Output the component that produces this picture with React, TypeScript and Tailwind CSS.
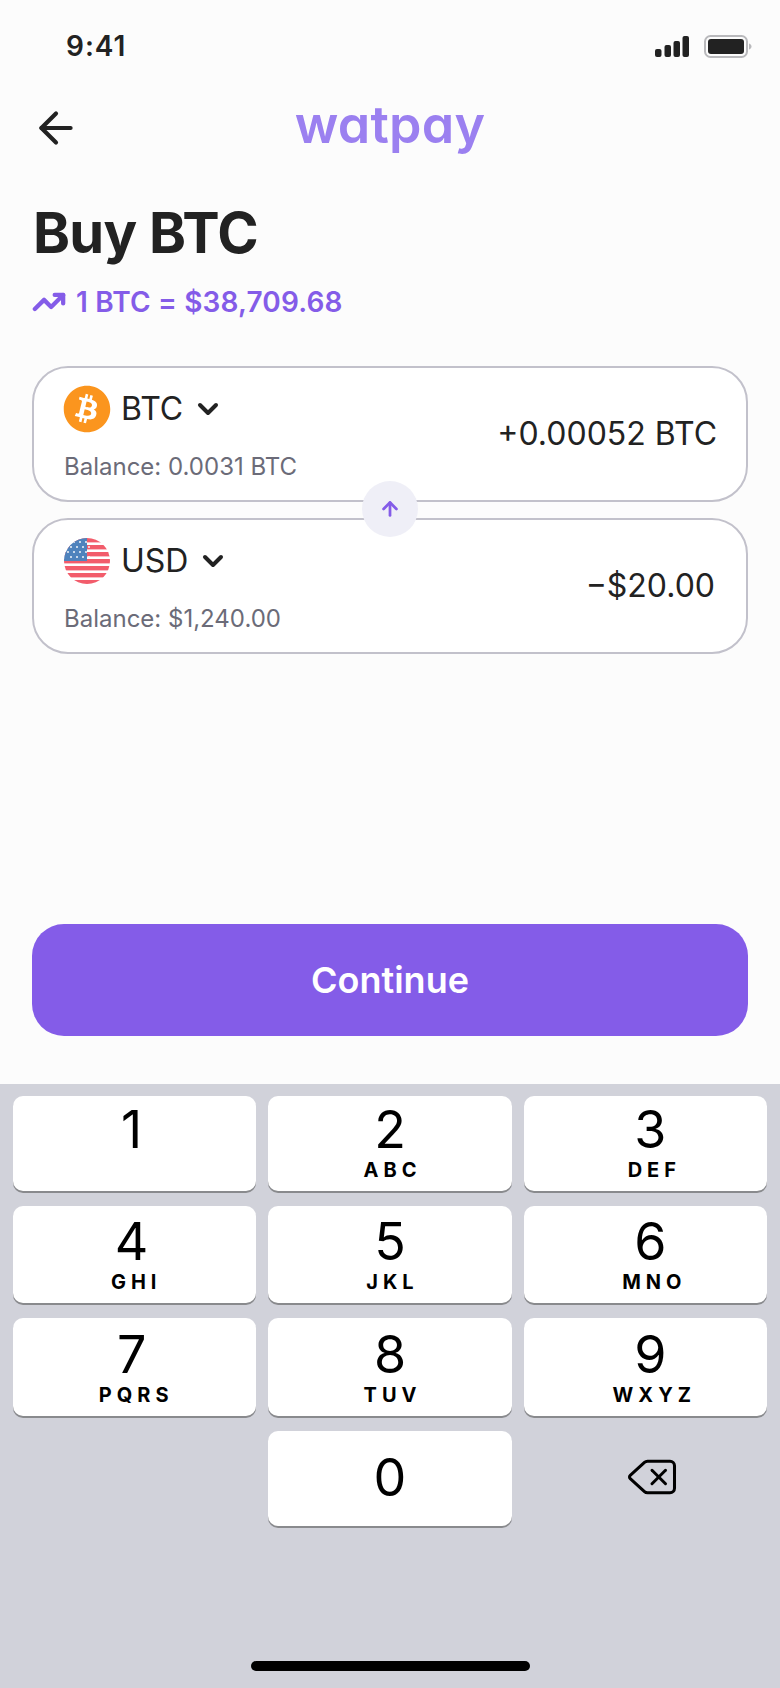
import { ArrowLeft, ArrowUp, ChevronDown, Delete, TrendingUp } from "lucide-react";
import { FaBitcoin } from "react-icons/fa";

function UsFlag() {
  const stripes = [0, 7, 14, 21, 28, 35, 42];
  const stars: [number, number][] = [];
  for (let r = 0; r < 4; r++) {
    for (let c = 0; c < 4; c++) {
      stars.push([4 + c * 6 + (r % 2 ? 3 : 0), 4 + r * 5]);
    }
  }
  return (
    <svg width="46" height="46" viewBox="0 0 46 46" className="mx-px shrink-0">
      <defs>
        <clipPath id="flag-circle">
          <circle cx="23" cy="23" r="23" />
        </clipPath>
      </defs>
      <g clipPath="url(#flag-circle)">
        <rect width="46" height="46" fill="#ffffff" />
        {stripes.map((y) => (
          <rect key={y} x="0" y={y} width="46" height="4.4" fill="#f25c6b" />
        ))}
        <rect x="0" y="0" width="23" height="23" fill="#4f83bd" />
        {stars.map(([x, y], i) => (
          <circle key={i} cx={x} cy={y} r="1" fill="#f1f3fa" />
        ))}
      </g>
    </svg>
  );
}

function Signal() {
  return (
    <svg width="34" height="22" viewBox="0 0 34 22">
      <rect x="0" y="13" width="6.5" height="8" rx="2" fill="#222222" />
      <rect x="9.5" y="9" width="6.5" height="12" rx="2" fill="#222222" />
      <rect x="18.5" y="5" width="6.5" height="16" rx="2" fill="#222222" />
      <rect x="27.5" y="0" width="6.5" height="21" rx="2" fill="#222222" />
    </svg>
  );
}

function Battery() {
  return (
    <svg width="48" height="23" viewBox="0 0 48 23">
      <rect x="1" y="1" width="42" height="21" rx="5.5" fill="none" stroke="#b9b9bc" strokeWidth="2" />
      <rect x="4" y="4" width="36" height="15" rx="3" fill="#222222" />
      <path d="M45 8.5c1.6.5 2.5 1.6 2.5 3s-.9 2.5-2.5 3z" fill="#b9b9bc" />
    </svg>
  );
}

function Key({
  digit,
  letters,
  top,
  digitShift = "",
  letterShift = "pl-[5px]",
}: {
  digit: string;
  letters?: string;
  top: string;
  digitShift?: string;
  letterShift?: string;
}) {
  return (
    <div className={`flex flex-col items-center rounded-[10px] bg-white shadow-[0_2px_0_#898a8d] ${top}`}>
      <span className={`text-[52px] leading-[52px] text-black ${digitShift}`}>{digit}</span>
      {letters && (
        <span className={`mt-[4px] text-[20px] leading-[20px] font-bold tracking-[5px] text-black ${letterShift}`}>
          {letters}
        </span>
      )}
    </div>
  );
}

function CurrencyCard({
  icon,
  code,
  balance,
  amount,
  right,
}: {
  icon: React.ReactNode;
  code: string;
  balance: string;
  amount: string;
  right: string;
}) {
  return (
    <div className={`flex h-[136px] items-center justify-between rounded-[36px] border-2 border-[#c2c1cb] bg-white pl-[29px] ${right}`}>
      <div className="flex flex-col">
        <div className="flex h-[48px] items-center">
          {icon}
          <span className="ml-[10px] text-[32px] leading-[48px] text-[#222222]">{code}</span>
          <ChevronDown size={32} strokeWidth={3} className="ml-[9px] text-[#222222]" />
        </div>
        <span className="mt-[18px] pl-px text-[24px] leading-[32px] text-[#6b6b78]">{balance}</span>
      </div>
      <span className="text-[32px] leading-[40px] text-[#222222]">{amount}</span>
    </div>
  );
}

export default function App() {
  return (
    <div className="flex h-[1688px] w-[780px] flex-col overflow-hidden bg-[#fcfcfc] font-['Inter',sans-serif]">
      <div className="flex h-[92px] shrink-0 items-start justify-between pt-[29px] pr-[28px] pl-[66px]">
        <span className="text-[28px] leading-[34px] font-semibold tracking-[1px] text-[#222222]">9:41</span>
        <div className="flex items-center gap-[15px] pt-[6px]">
          <Signal />
          <Battery />
        </div>
      </div>

      <div className="relative flex h-[72px] shrink-0 items-center justify-center">
        <ArrowLeft size={50} strokeWidth={2} className="absolute left-[31px] text-[#222222]" />
        <span className="mb-[6px] text-[52px] leading-[60px] font-semibold tracking-[0.2px] text-[#9b80f0] [font-feature-settings:'cv11']">
          watpay
        </span>
      </div>

      <div className="flex flex-col px-[32px]">
        <h1 className="mt-[37px] ml-px text-[56px] leading-[64px] font-bold tracking-[-0.7px] text-[#222222]">Buy BTC</h1>
        <div className="mt-[21px] flex h-[32px] items-center text-[#845ce8]">
          <TrendingUp size={34} strokeWidth={3} className="shrink-0" />
          <span className="ml-[10px] text-[28px] leading-[32px] font-semibold tracking-[0.15px]">1 BTC = $38,709.68</span>
        </div>

        <div className="relative mt-[48px] flex flex-col gap-[16px]">
          <CurrencyCard
            icon={<FaBitcoin size={48} className="shrink-0 text-[#fb951e]" />}
            code="BTC"
            balance="Balance: 0.0031 BTC"
            amount="+0.00052 BTC"
            right="pr-[29px]"
          />
          <CurrencyCard
            icon={<UsFlag />}
            code="USD"
            balance="Balance: $1,240.00"
            amount="−$20.00"
            right="pr-[31px]"
          />
          <div className="absolute top-[115px] left-[330px] flex h-[56px] w-[56px] items-center justify-center rounded-full bg-[#efeff7]">
            <ArrowUp size={22} strokeWidth={3} className="text-[#845ce8]" />
          </div>
        </div>

        <button className="mt-[270px] flex h-[112px] w-[716px] items-center justify-center rounded-[32px] bg-[#845ce8] text-[36px] font-semibold text-white">
          Continue
        </button>
      </div>

      <div className="mt-[48px] flex flex-1 flex-col bg-[#d1d2da] px-[13px] pt-[12px]">
        <div className="grid grid-cols-3 grid-rows-[95px_97px_98px_95px] gap-x-[12px] gap-y-[15px]">
          <Key digit="1" top="pt-[8px]" digitShift="pr-[6px]" />
          <Key digit="2" letters="ABC" top="pt-[8px]" />
          <Key digit="3" letters="DEF" top="pt-[8px]" digitShift="pl-[10px]" letterShift="pl-[18px]" />
          <Key digit="4" letters="GHI" top="pt-[10px]" digitShift="pr-[6px]" letterShift="pl-[3px]" />
          <Key digit="5" letters="JKL" top="pt-[10px]" />
          <Key digit="6" letters="MNO" top="pt-[10px]" digitShift="pl-[10px]" letterShift="pl-[18px]" />
          <Key digit="7" letters="PQRS" top="pt-[11px]" digitShift="pr-[6px]" letterShift="pl-[3px]" />
          <Key digit="8" letters="TUV" top="pt-[11px]" />
          <Key digit="9" letters="WXYZ" top="pt-[11px]" digitShift="pl-[10px]" letterShift="pl-[18px]" />
          <div />
          <Key digit="0" top="pt-[21px]" />
          <div className="flex items-center justify-center">
            <Delete size={54} strokeWidth={1.35} className="mb-[4px] ml-[14px] text-black" />
          </div>
        </div>
        <div className="mx-auto mt-[135px] h-[10px] w-[279px] rounded-full bg-black" />
      </div>
    </div>
  );
}
